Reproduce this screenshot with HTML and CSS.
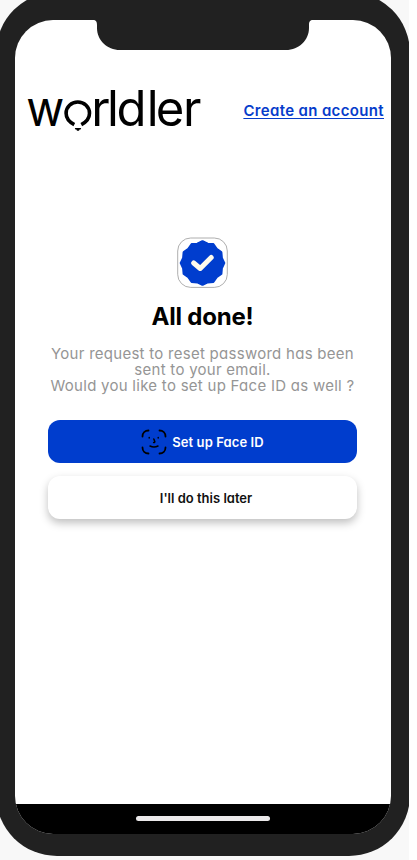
FILE: index.html
```
<!DOCTYPE html>
<html lang="en">
<head>
<meta charset="utf-8">
<title>Worldler</title>
<link rel="stylesheet" href="styles.css">
</head>
<body>
<div class="stage">
  <div class="phone">
    <div class="screen">
      <svg class="notch" width="220" height="31" viewBox="0 0 220 31"><path d="M0 0H220C217 0 216 1.5 216 5V8C216 20 206 30 193 30H27C14 30 4 20 4 8V5C4 1.5 3 0 0 0Z"/></svg>
      <header class="header">
        <svg class="logo" width="178" height="66" viewBox="0 -10 178 66" role="img" aria-label="worldler">
          <text x="-.8" y="42" textLength="38" lengthAdjust="spacingAndGlyphs">w</text>
          <path class="ring" d="M47.3 40.6C41.5 37.5 39.1 34 39.1 29.2A11.7 11.2 0 0 1 62.5 29.2C62.5 34 60.1 37.5 54.3 40.6"/>
          <path d="M47.8 44H54.2L53.6 45.4H52.6L52 46.8H50L49.4 45.4H48.4Z"/>
          <text x="64.2 80 89.6 119.8 128.8 156" y="42">rldler</text>
        </svg>
        <a class="signup">Create an account</a>
      </header>
      <main class="content">
        <svg class="badge" width="51" height="51" viewBox="0 0 51 51">
          <rect class="badge-frame" x=".7" y="1" width="49.6" height="49.4" rx="13"/>
          <path class="seal" d="M25.5 4.5L30.6 7L36.3 7.4L39.5 12L44.1 15.3L44.6 21L47 26L44.6 31.1L44.1 36.8L39.5 40L36.3 44.6L30.6 45.1L25.5 47.5L20.4 45.1L14.7 44.6L11.5 40L6.9 36.8L6.4 31.1L4 26L6.4 21L6.9 15.3L11.5 12L14.7 7.4L20.4 7Z"/>
          <path class="tick" d="M16.7 26L23.2 31.5L34.2 20.5"/>
        </svg>
        <h1 class="title">All done!</h1>
        <p class="message">Your request to reset password has been<br>sent to your email.<br>Would you like to set up Face ID as well ?</p>
        <button class="button primary">
          <svg class="face" width="26" height="26" viewBox="0 0 26 26"><path d="M1.5 7.5C1.5 4 4 1.5 7.5 1.5M18.5 1.5C22 1.5 24.5 4 24.5 7.5M24.5 18.5C24.5 22 22 24.5 18.5 24.5M7.5 24.5C4 24.5 1.5 22 1.5 18.5"/><path class="features" d="M8.2 8.5V9M17.2 8.5V9M12.8 10L13.8 12.5Q14 13.6 12.6 13.6M9 17Q13 18.9 17 17"/></svg>
          <span>Set up Face ID</span>
        </button>
        <button class="button secondary"><span>I'll do this later</span></button>
      </main>
      <footer class="home-bar"><div class="home-indicator"></div></footer>
    </div>
  </div>
</div>
</body>
</html>
```
FILE: styles.css
```
* { box-sizing: border-box; }
body { margin: 0; background: #fff; font-family: Inter, sans-serif; font-feature-settings: "cv11"; }
.stage { width: 409px; height: 860px; overflow: hidden; background: #f8f8f8; }
.phone { width: 414px; height: 864px; margin: -8px 0 0 -4px; padding: 28px 19px 22px; border-radius: 61px; background: #212121; }
.screen { position: relative; display: flex; flex-direction: column; width: 376px; height: 814px; border-radius: 38px; overflow: hidden; background: #fff; }
.notch { position: absolute; left: 78px; top: 0; fill: #212121; }
.header { display: flex; justify-content: space-between; align-items: flex-start; height: 217px; padding: 54px 7px 0 12px; }
.logo { display: block; font-family: Inter, sans-serif; font-size: 49px; fill: #000; overflow: visible; }
.ring { fill: none; stroke: #000; stroke-width: 3.6; }
.signup { margin-top: 27px; color: #063ccb; font-size: 15px; font-weight: 600; line-height: 20px; letter-spacing: .35px; text-decoration: underline; text-decoration-thickness: 1px; text-underline-offset: 2px; white-space: nowrap; }
.content { flex: 1; display: flex; flex-direction: column; align-items: center; padding: 0 34px 0 33px; }
.badge { display: block; }
.badge-frame { fill: #fff; stroke: #999; stroke-width: .8; }
.seal { fill: #003dce; stroke: #003dce; stroke-width: 2.6; stroke-linejoin: round; }
.tick { fill: none; stroke: #fffbed; stroke-width: 5; stroke-linecap: round; stroke-linejoin: round; }
.title { margin: 14px 0 0; font-size: 24px; line-height: 30px; font-weight: 700; letter-spacing: -.2px; color: #000; }
.message { margin: 14px 0 0; height: 48px; font-size: 15px; line-height: 16px; letter-spacing: .27px; text-align: center; white-space: nowrap; color: #959595; }
.button { display: flex; align-items: center; justify-content: center; width: 309px; height: 43px; flex: none; padding: 0; border: 0; border-radius: 12px; font: 600 13px Inter, sans-serif; font-feature-settings: "cv11"; }
.primary { gap: 5px; margin-top: 26px; background: #003dcd; color: #fff; letter-spacing: .1px; }
.secondary { margin-top: 13px; padding-left: 7px; background: #fff; color: #111; box-shadow: 0 4px 9px rgba(0, 0, 0, .25); }
.face { fill: none; stroke: #000; stroke-width: 1.8; stroke-linecap: round; }
.features { stroke-width: 1.5; }
.home-bar { display: flex; justify-content: center; height: 30px; padding-top: 12px; background: #000; }
.home-indicator { width: 134px; height: 5px; border-radius: 3px; background: #ebe9ea; }
```
